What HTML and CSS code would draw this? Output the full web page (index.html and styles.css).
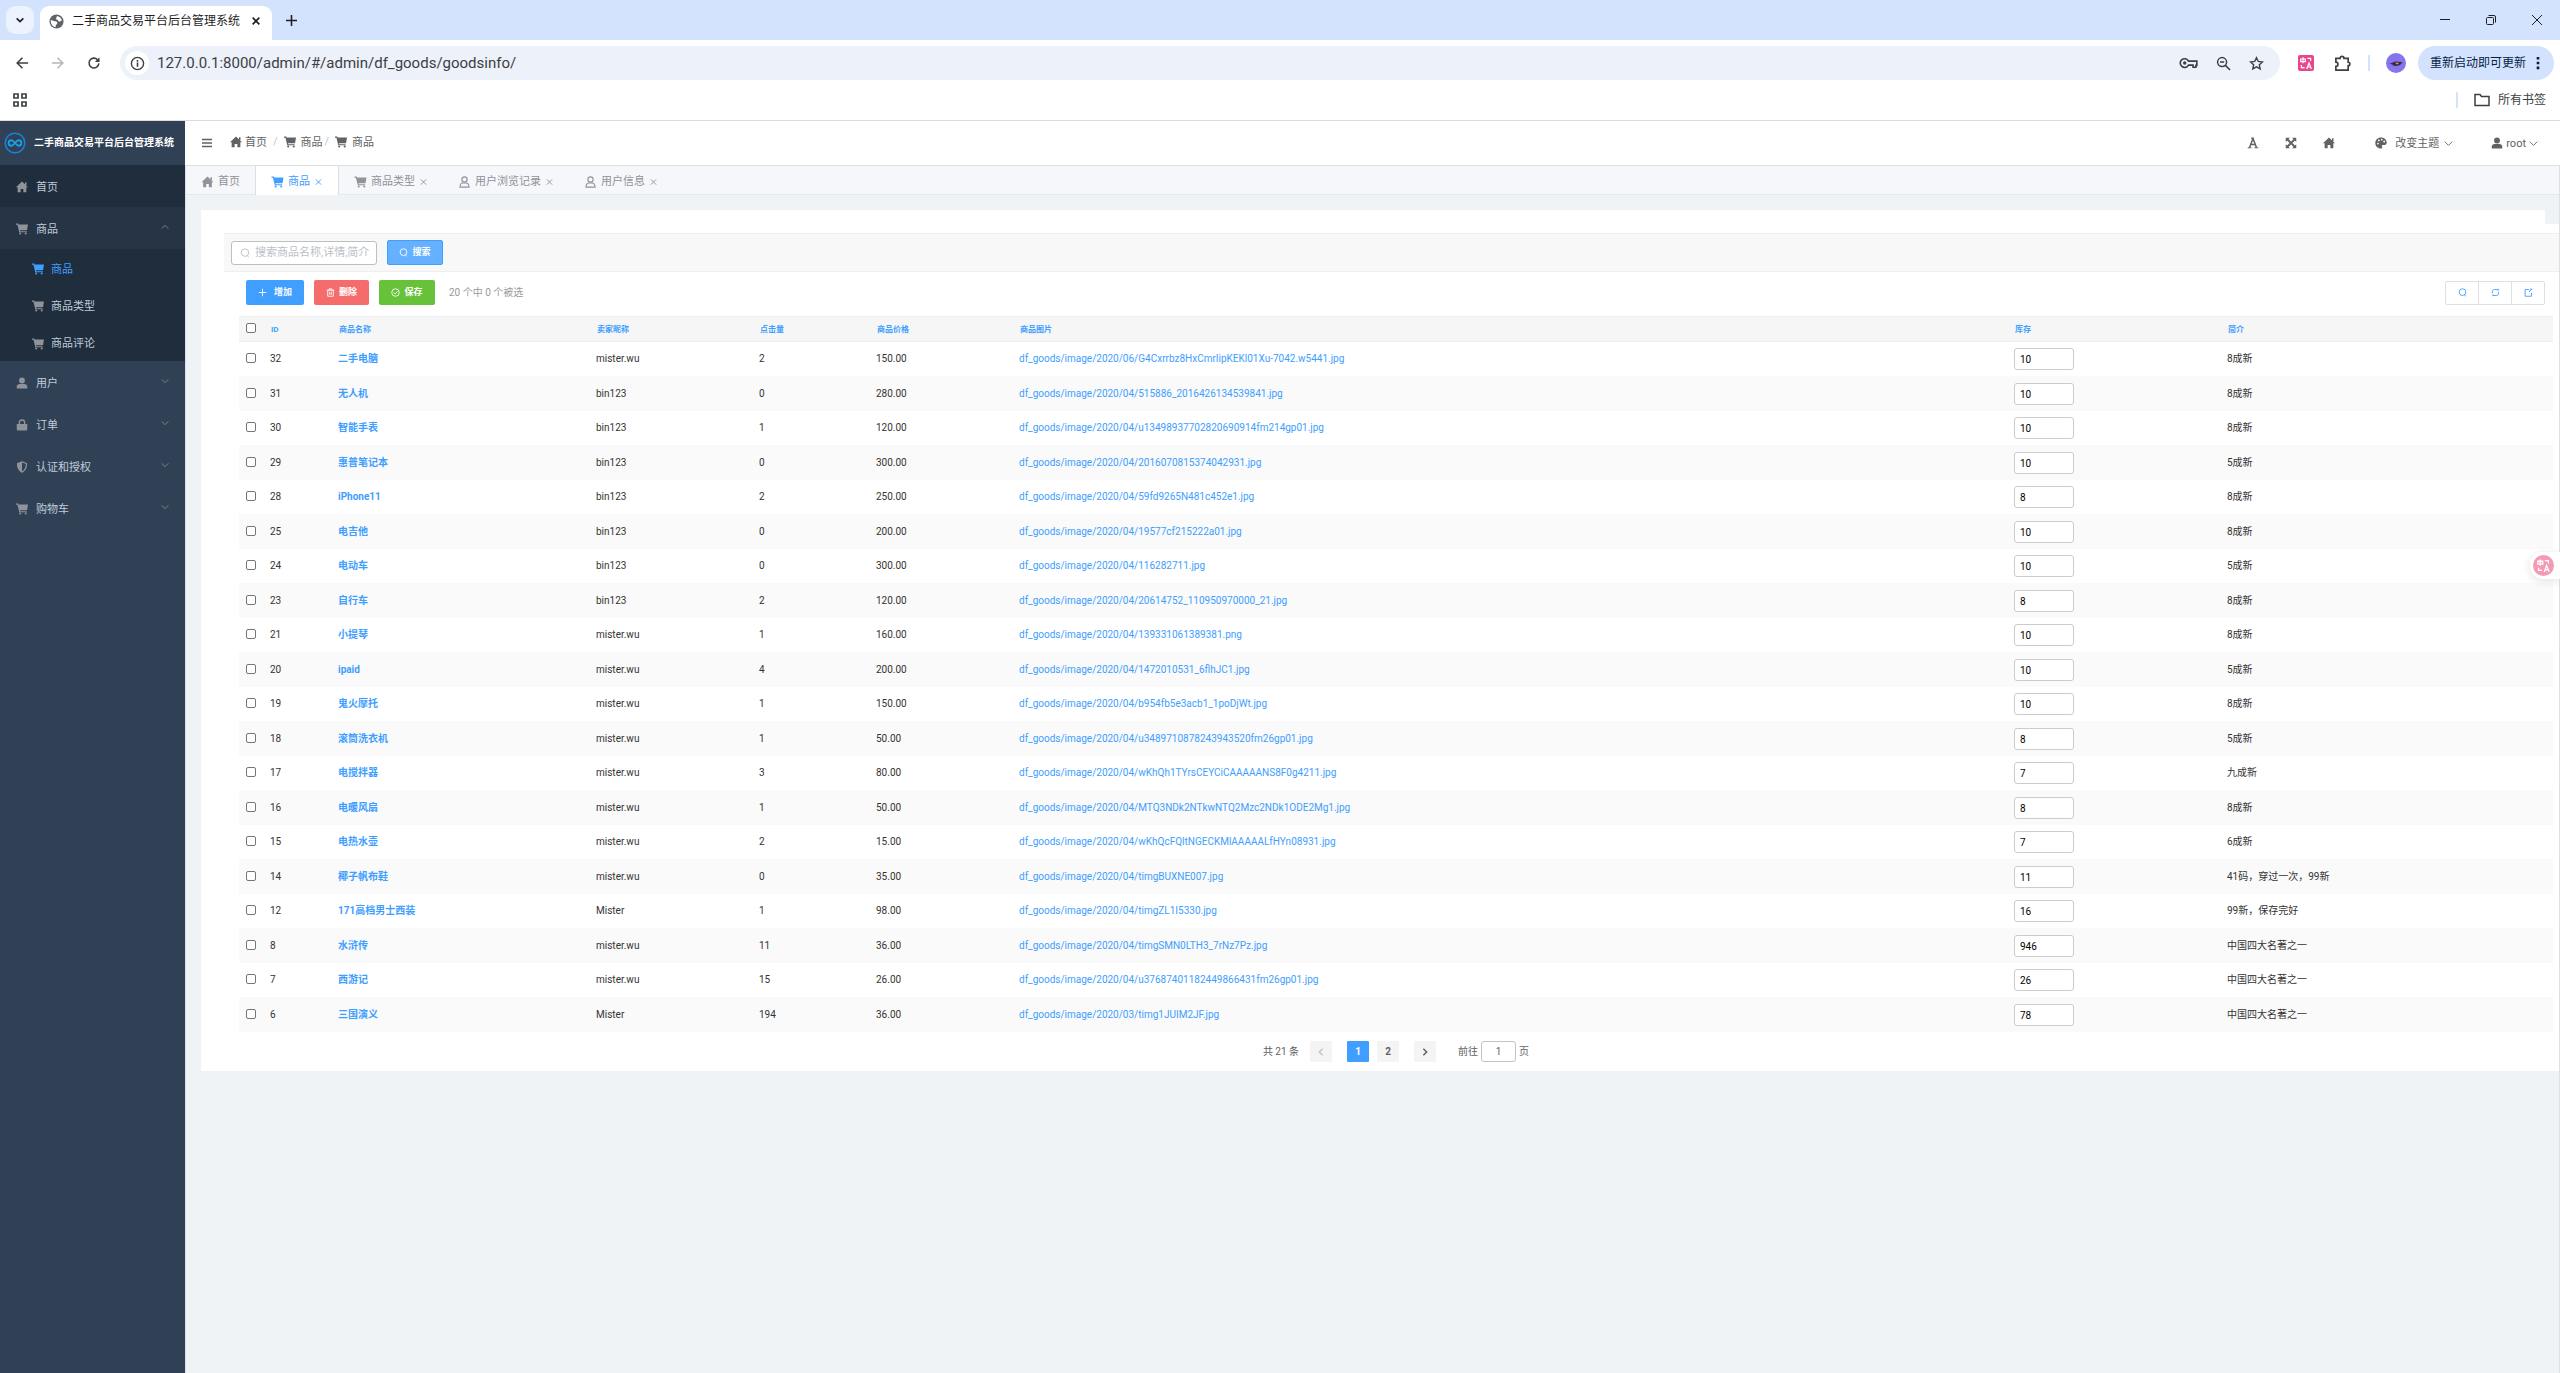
FILE: index.html
```html
<!DOCTYPE html>
<html lang="zh-CN">
<head>
  <meta charset="UTF-8">
  <title>二手商品交易平台后台管理系统</title>
  <meta name="viewport" content="width=device-width, initial-scale=1.0">
  <link rel="stylesheet" href="styles.css">
</head>
<body>
  <svg class="sprite" aria-hidden="true">
    <symbol id="i-home" viewBox="0 0 16 16"><path fill="currentColor" d="M8 .8 16 8.2h-2.2V15H9.8v-4.4H6.2V15H2.2V8.2H0L8 .8z"/><path fill="currentColor" d="M12 1.8h2v4h-2z"/></symbol>
    <symbol id="i-cart" viewBox="0 0 16 16"><path fill="currentColor" d="M0 .8h3l.5 1.200H16l-1.300 7.800H5.300l.3 1.200h8.600v1.400H4.400L1.900 2.300H0z"/><circle cx="5.6" cy="14" r="1.4" fill="currentColor"/><circle cx="13" cy="14" r="1.4" fill="currentColor"/></symbol>
    <symbol id="i-user" viewBox="0 0 16 16"><circle cx="8" cy="4.6" r="3.9" fill="currentColor"/><path fill="currentColor" d="M1 15.2v-2.4C1 10.600 2.800 9.300 5 9.300h6c2.200 0 4 1.300 4 3.500v2.400z"/></symbol>
    <symbol id="i-user-o" viewBox="0 0 16 16"><circle cx="8" cy="4.700" r="3.500" fill="none" stroke="currentColor" stroke-width="1.500"/><path fill="none" stroke="currentColor" stroke-width="1.500" d="M2 14.800c0-3.500 2-5.500 4-5.500h4c2 0 4 2 4 5.500z"/></symbol>
    <symbol id="i-bag" viewBox="0 0 16 16"><path fill="currentColor" d="M1 6.500h14v7.200c0 1-.7 1.500-1.500 1.500h-11c-.8 0-1.500-.5-1.500-1.500z"/><path fill="none" stroke="currentColor" stroke-width="1.800" d="M4.500 8V4.800a3.500 3.500 0 0 1 7 0V8"/></symbol>
    <symbol id="i-shield" viewBox="0 0 16 16"><path fill="none" stroke="currentColor" stroke-width="1.600" d="M8 1.200l6 2.200c0 5.500-1.500 9-6 11.400C3.500 12.400 2 8.900 2 3.400z"/><path fill="currentColor" d="M8 1.200v13.600C3.500 12.400 2 8.900 2 3.400z"/></symbol>
    <symbol id="i-down" viewBox="0 0 12 12"><path fill="none" stroke="currentColor" stroke-width="1.200" d="M1 3.500l5 5 5-5"/></symbol>
    <symbol id="i-up" viewBox="0 0 12 12"><path fill="none" stroke="currentColor" stroke-width="1.200" d="M1 8.500l5-5 5 5"/></symbol>
    <symbol id="i-close" viewBox="0 0 12 12"><path fill="none" stroke="currentColor" stroke-width="1.400" d="M2 2l8 8M10 2l-8 8"/></symbol>
    <symbol id="i-menu" viewBox="0 0 12 12"><path stroke="currentColor" stroke-width="1.300" d="M1 2.500h10M1 6h10M1 9.500h10"/></symbol>
    <symbol id="i-letter" viewBox="0 0 16 16"><path fill="none" stroke="currentColor" stroke-width="2" d="M3.400 14L8 2l4.600 12M4.800 10h6.400"/><path stroke="currentColor" stroke-width="1.400" d="M1 14.300h5M10 14.300h5M5.500 1.800h3"/></symbol>
    <symbol id="i-full" viewBox="0 0 16 16"><path fill="currentColor" d="M1 1h5.500L1 6.500zM15 1v5.500L9.500 1zM1 15V9.500L6.500 15zM15 15H9.500L15 9.500z"/><path stroke="currentColor" stroke-width="2.600" d="M3 3l10 10M13 3L3 13"/></symbol>
    <symbol id="i-palette" viewBox="0 0 16 16"><path fill="currentColor" fill-rule="evenodd" d="M8 .6c4.400 0 7.600 3 7.600 6.700 0 2.500-1.800 3.500-3.600 3.500h-1.700c-1.500 0-1.300 1.400-.8 2.200.6 1.300 0 2.400-1.500 2.400C3.600 15.400.4 12.200.4 8S3.800.6 8 .6zM4 7.500a1.200 1.200 0 1 0 0 2.400 1.200 1.200 0 0 0 0-2.400zM5.200 3.400a1.200 1.200 0 1 0 0 2.400 1.200 1.200 0 0 0 0-2.400zM9 2.200a1.200 1.200 0 1 0 0 2.400 1.200 1.200 0 0 0 0-2.400zM12.200 4.800a1.200 1.200 0 1 0 0 2.400 1.200 1.200 0 0 0 0-2.400z"/></symbol>
    <symbol id="i-search" viewBox="0 0 12 12"><path fill="none" stroke="currentColor" stroke-width="1.200" d="M6 1a4.500 4.500 0 1 0 0 9 4.500 4.500 0 0 0 0-9zM8.500 9.200l2 1.800"/></symbol>
    <symbol id="i-plus" viewBox="0 0 12 12"><path stroke="currentColor" stroke-width="1.200" d="M6 1v10M1 6h10"/></symbol>
    <symbol id="i-trash" viewBox="0 0 12 12"><path fill="none" stroke="currentColor" stroke-width="1.200" d="M1 3h10M4 3V1.200h4V3M2.300 3v8h7.400V3M4.900 5v4M7.100 5v4"/></symbol>
    <symbol id="i-check" viewBox="0 0 12 12"><circle cx="6" cy="6" r="5" fill="none" stroke="currentColor" stroke-width="1.200"/><path fill="none" stroke="currentColor" stroke-width="1.200" d="M3.500 6l2 2 3.300-3.600"/></symbol>
    <symbol id="i-refresh" viewBox="0 0 12 12"><path fill="none" stroke="currentColor" stroke-width="1.200" d="M2 7V5C2 3 3 2 5 2H9.500M10 5V7c0 2-1 3-3 3H2.500M9.500 1v2.500M2.500 11V8.500"/></symbol>
    <symbol id="i-export" viewBox="0 0 12 12"><path fill="none" stroke="currentColor" stroke-width="1.200" d="M6.500 2H1.500v9h8.500V6.500M7 5l3.500-3.500M8 1.500h3M7.500 3.500v2"/></symbol>
    <symbol id="i-translate" viewBox="0 0 24 24"><path fill="none" stroke="currentColor" stroke-width="1.800" d="M4 6h7v4H4zM7.500 3.500v9M14 5h5v4M5 15v4h5M13 21l3.500-9 3.500 9M14.500 18h4"/></symbol>
  </svg>

  <!-- browser window -->
  <header class="browser">
    <div class="tabstrip">
      <button class="tab-search" aria-label="搜索标签页"><svg viewBox="0 0 12 12"><path fill="none" stroke="currentColor" stroke-width="2" d="M2 4l4 4 4-4"/></svg></button>
      <div class="browser-tab">
        <svg class="favicon" viewBox="0 0 16 16"><circle cx="8" cy="8" r="7.500" fill="#5f6368"/><path fill="#fff" d="M2 6.500c2 .2 2.600 1.200 4.500 1.300 1.700 0 2.600 1 2.300 2.300-.2 1-1.400 1-1.600 2.200l-.3 1.900C3.500 13.700 1.300 10 2 6.500zM8.600 2c2 .2 4.600 2 5.200 4.600-1.200.6-1.800 1.700-3 1.500-1.400-.3-1-1.900-2.300-2.200C7.200 5.500 7 4.400 8 3.700z"/></svg>
        <span>二手商品交易平台后台管理系统</span>
        <button aria-label="关闭"><svg viewBox="0 0 12 12"><path stroke="currentColor" stroke-width="2" d="M2 2l8 8M10 2l-8 8"/></svg></button>
      </div>
      <button class="tab-new" aria-label="新标签页"><svg viewBox="0 0 12 12"><path stroke="currentColor" stroke-width="1.700" d="M6 0v12M0 6h12"/></svg></button>
      <div class="window-buttons">
        <button aria-label="最小化"><svg viewBox="0 0 12 12"><path stroke="currentColor" d="M1 5.500h10"/></svg></button>
        <button aria-label="还原"><svg viewBox="0 0 12 12"><rect x="1.500" y="3.500" width="7" height="7" rx="1" fill="none" stroke="currentColor"/><path fill="none" stroke="currentColor" d="M3.500 1.500h5.500a1.500 1.500 0 0 1 1.500 1.500v5.500"/></svg></button>
        <button aria-label="关闭窗口"><svg viewBox="0 0 12 12"><path stroke="currentColor" d="M1 1l10 10M11 1L1 11"/></svg></button>
      </div>
    </div>
    <div class="toolbar">
      <button class="nav" aria-label="后退"><svg viewBox="0 0 16 16"><path fill="none" stroke="currentColor" stroke-width="1.800" d="M15 8H3M8.500 2L2.500 8l6 6"/></svg></button>
      <button class="nav nav-off" aria-label="前进"><svg viewBox="0 0 16 16"><path fill="none" stroke="currentColor" stroke-width="1.800" d="M1 8h12M7.500 2l6 6-6 6"/></svg></button>
      <button class="nav" aria-label="刷新"><svg viewBox="0 0 16 16"><path fill="none" stroke="currentColor" stroke-width="1.800" d="M13.500 8.500A5.600 5.600 0 1 1 12 4.200L13.500 6"/><path fill="currentColor" d="M14.300 1.500v5.300H9z"/></svg></button>
      <div class="omnibox">
        <span class="site-info"><svg viewBox="0 0 16 16"><circle cx="8" cy="8" r="6.500" fill="none" stroke="currentColor" stroke-width="1.500"/><path stroke="currentColor" stroke-width="1.700" d="M8 7v4.500M8 4.200v1.800"/></svg></span>
        <input class="url" type="text" aria-label="地址栏" value="127.0.0.1:8000/admin/#/admin/df_goods/goodsinfo/">
        <button aria-label="密码"><svg class="key" viewBox="0 0 20 12"><path fill="none" stroke="currentColor" stroke-width="1.700" d="M10 4h8.800v4.500h-1v2h-3V8.200H10A4.600 4.600 0 1 1 10 4z"/><circle cx="6" cy="6" r="1.800" fill="currentColor"/></svg></button>
        <button aria-label="缩放"><svg viewBox="0 0 16 16"><circle cx="6.500" cy="6.500" r="4.800" fill="none" stroke="currentColor" stroke-width="1.600"/><path stroke="currentColor" stroke-width="1.600" d="M10 10l5 5M4.300 6.500h4.400"/></svg></button>
        <button aria-label="添加书签"><svg viewBox="0 0 16 16"><path fill="none" stroke="currentColor" stroke-width="1.500" d="M8 1.800l1.900 4 4.400.5-3.300 3 .9 4.400L8 11.500l-3.900 2.200.9-4.400-3.300-3 4.400-.5z"/></svg></button>
      </div>
      <button class="ext ext-translate" aria-label="翻译"><svg><use href="#i-translate"/></svg></button>
      <button class="ext" aria-label="扩展程序"><svg viewBox="0 0 18 18"><path fill="none" stroke="currentColor" stroke-width="1.800" d="M2 3.500h4.500a2 2 0 0 1 4 0H15v4.200a1.800 1.800 0 0 1 0 3.600V16H2v-4a2.200 2.200 0 0 0 0-4.400z"/></svg></button>
      <i class="divider"></i>
      <span class="avatar"><svg viewBox="0 0 20 20"><circle cx="10" cy="10" r="10" fill="#8574ee"/><path fill="#3d2a3c" d="M3.500 10c3 .8 3.500-1.600 7-1.500 3 .1 3.600 1 6 .6-1.400 2.400-2.600 3.800-6.400 3.800-2.600 0-3.600-.6-3.800-1.700-1.200 0-2-.3-2.800-1.200z"/><path fill="#d9a58c" d="M9 9.500l4 .4-2 1.700z"/><path stroke="#b66fd8" fill="none" d="M14 3l1 4M5 15l4 3M15 14l1 2"/></svg></span>
      <button class="update">重新启动即可更新 <svg viewBox="0 0 4 16"><path fill="currentColor" d="M.5 1h3v3h-3zM.5 6.500h3v3h-3zM.5 12h3v3h-3z"/></svg></button>
    </div>
    <div class="bookmarks">
      <button aria-label="应用"><svg viewBox="0 0 16 16"><path fill="none" stroke="currentColor" stroke-width="1.700" d="M2 2h4v4H2zM10 2h4v4h-4zM2 10h4v4H2zM10 10h4v4h-4z"/></svg></button>
      <button class="all-bookmarks"><svg viewBox="0 0 16 14"><path fill="none" stroke="currentColor" stroke-width="1.500" d="M1 1.500h5l1.500 2H15v9H1z"/></svg>所有书签</button>
    </div>
  </header>

  <div class="app">
    <aside class="sidebar">
      <div class="logo">
        <svg viewBox="0 0 24 24"><circle cx="12" cy="12" r="10.700" fill="none" stroke="#1a82d8" stroke-width="1.600"/><path fill="none" stroke="#17a0e8" stroke-width="2" d="M12 12c-1.600-2-2.600-3-4-3a3 3 0 0 0 0 6c1.400 0 2.400-1 4-3s2.600-3 4-3a3 3 0 0 1 0 6c-1.400 0-2.400-1-4-3z"/></svg>
        <strong>二手商品交易平台后台管理系统</strong>
      </div>
      <nav>
        <a class="item dark" href="#"><svg><use href="#i-home"/></svg>首页</a>
        <a class="item open" href="#"><svg><use href="#i-cart"/></svg>商品<svg class="arrow"><use href="#i-up"/></svg></a>
        <div class="submenu">
          <a class="active" href="#"><svg><use href="#i-cart"/></svg>商品</a>
          <a href="#"><svg><use href="#i-cart"/></svg>商品类型</a>
          <a href="#"><svg><use href="#i-cart"/></svg>商品评论</a>
        </div>
        <a class="item" href="#"><svg><use href="#i-user"/></svg>用户<svg class="arrow"><use href="#i-down"/></svg></a>
        <a class="item" href="#"><svg><use href="#i-bag"/></svg>订单<svg class="arrow"><use href="#i-down"/></svg></a>
        <a class="item" href="#"><svg><use href="#i-shield"/></svg>认证和授权<svg class="arrow"><use href="#i-down"/></svg></a>
        <a class="item" href="#"><svg><use href="#i-cart"/></svg>购物车<svg class="arrow"><use href="#i-down"/></svg></a>
      </nav>
    </aside>

    <main class="main">
      <div class="topbar">
        <button class="fold" aria-label="折叠菜单"><svg><use href="#i-menu"/></svg></button>
        <div class="breadcrumb">
          <a href="#"><svg><use href="#i-home"/></svg>首页</a><i>/</i>
          <a class="wide" href="#"><svg><use href="#i-cart"/></svg>商品</a><i>/</i>
          <a class="wide" href="#"><svg><use href="#i-cart"/></svg>商品</a>
        </div>
        <div class="actions">
          <button aria-label="字体"><svg><use href="#i-letter"/></svg></button>
          <button aria-label="全屏"><svg><use href="#i-full"/></svg></button>
          <button aria-label="主页"><svg><use href="#i-home"/></svg></button>
        </div>
        <button class="theme"><svg><use href="#i-palette"/></svg>改变主题<svg class="caret"><use href="#i-down"/></svg></button>
        <button class="account"><svg><use href="#i-user"/></svg>root<svg class="caret"><use href="#i-down"/></svg></button>
      </div>

      <div class="workspace">
        <div class="tabs">
          <a href="#"><svg><use href="#i-home"/></svg>首页</a>
          <a class="active" href="#"><svg><use href="#i-cart"/></svg>商品<svg class="close"><use href="#i-close"/></svg></a>
          <a href="#"><svg><use href="#i-cart"/></svg>商品类型<svg class="close"><use href="#i-close"/></svg></a>
          <a href="#"><svg><use href="#i-user-o"/></svg>用户浏览记录<svg class="close"><use href="#i-close"/></svg></a>
          <a href="#"><svg><use href="#i-user-o"/></svg>用户信息<svg class="close"><use href="#i-close"/></svg></a>
        </div>

        <div class="panel-top"></div>
        <div class="panel">
          <form class="search">
            <label class="search-box"><svg><use href="#i-search"/></svg><input type="text" aria-label="搜索" placeholder="搜索商品名称,详情,简介"></label>
            <button class="btn btn-search" type="button"><svg><use href="#i-search"/></svg>搜索</button>
          </form>

          <div class="operations">
            <button class="btn btn-add"><svg><use href="#i-plus"/></svg>增加</button>
            <button class="btn btn-delete"><svg><use href="#i-trash"/></svg>删除</button>
            <button class="btn btn-save"><svg><use href="#i-check"/></svg>保存</button>
            <span>20 个中 0 个被选</span>
            <div class="tools">
              <button aria-label="搜索"><svg><use href="#i-search"/></svg></button>
              <button aria-label="刷新"><svg><use href="#i-refresh"/></svg></button>
              <button aria-label="新窗口打开"><svg><use href="#i-export"/></svg></button>
            </div>
          </div>

          <table class="goods">
            <thead>
              <tr>
                <th class="c-check"><input type="checkbox" aria-label="全选"></th>
                <th class="c-id"><a href="#">ID</a></th>
                <th class="c-name"><a href="#">商品名称</a></th>
                <th class="c-seller"><a href="#">卖家昵称</a></th>
                <th class="c-click"><a href="#">点击量</a></th>
                <th class="c-price"><a href="#">商品价格</a></th>
                <th><a href="#">商品图片</a></th>
                <th class="c-stock"><a href="#">库存</a></th>
                <th class="c-intro"><a href="#">简介</a></th>
              </tr>
            </thead>
            <tbody id="rows"></tbody>
          </table>

          <div class="pagination">
            <span>共 21 条</span>
            <button class="prev" disabled aria-label="上一页"><svg viewBox="0 0 12 12"><path fill="none" stroke="currentColor" stroke-width="1.800" d="M8 2L4 6l4 4"/></svg></button>
            <button class="current">1</button>
            <button>2</button>
            <button class="next" aria-label="下一页"><svg viewBox="0 0 12 12"><path fill="none" stroke="currentColor" stroke-width="1.800" d="M4 2l4 4-4 4"/></svg></button>
            <label>前往<input type="text" value="1">页</label>
          </div>
        </div>
      </div>
    </main>
  </div>

  <button class="float-translate" aria-label="翻译页面"><span><svg><use href="#i-translate"/></svg></span></button>

  <script src="goods.js"></script>
</body>
</html>
```
FILE: styles.css
```css
:root {
  --blue: #409eff;
  --red: #f56c6c;
  --green: #67c23a;
  --side: #304156;
  --side-dark: #1f2d3d;
  --line: #dcdfe6;
  --grey: #909399;
  --text: #606266;
}

* {
  box-sizing: border-box;
  margin: 0;
  padding: 0;
}

body {
  display: flex;
  flex-direction: column;
  min-height: 100vh;
  background: #fff;
  color: #333;
  font-family: Roboto, "Noto Sans CJK SC", sans-serif;
  font-size: 10px;
  line-height: 1;
}

button,
input {
  font: inherit;
  color: inherit;
  border: none;
  background: none;
  outline: none;
}

button {
  display: flex;
  align-items: center;
  cursor: pointer;
}

a {
  color: inherit;
  text-decoration: none;
}

i {
  font-style: normal;
}

svg {
  display: block;
  flex: none;
}

.sprite {
  display: none;
}

/* browser window */
.browser {
  flex: none;
  color: #3c4043;
  font-size: 12px;
  border-bottom: 1px solid #dcdcdc;
}

.tabstrip {
  display: flex;
  height: 40px;
  padding: 6px 0 0 6px;
  background: #d3e3fd;
  color: #1f1f1f;
}

.tab-search {
  justify-content: center;
  width: 28px;
  height: 28px;
  border-radius: 9px;
  background: #ecf2fe;
}

.tab-search svg {
  width: 10px;
  height: 10px;
}

.browser-tab {
  display: flex;
  align-items: center;
  gap: 8px;
  width: 232px;
  margin-left: 6px;
  padding: 0 11px 4px 9px;
  border-radius: 9px 9px 0 0;
  background: #fff;
}

.browser-tab span {
  flex: 1;
  white-space: nowrap;
}

.favicon {
  width: 15px;
  height: 15px;
}

.browser-tab button svg {
  width: 10px;
  height: 10px;
}

.tab-new {
  height: 28px;
  margin-left: 14px;
}

.tab-new svg {
  width: 11px;
  height: 11px;
}

.window-buttons {
  display: flex;
  height: 28px;
  margin-left: auto;
}

.window-buttons button {
  justify-content: center;
  width: 46px;
}

.window-buttons svg {
  width: 12px;
  height: 12px;
}

.toolbar {
  display: flex;
  align-items: center;
  height: 46px;
  padding: 0 6px 0 12px;
}

.nav {
  width: 36px;
}

.nav svg {
  width: 14px;
  height: 14px;
  margin-left: 3px;
}

.nav-off {
  color: #b4b6b8;
}

.omnibox {
  flex: 1;
  display: flex;
  align-items: center;
  gap: 18px;
  height: 34px;
  padding: 0 16px 0 5px;
  border-radius: 17px;
  background: #edf1fa;
}

.omnibox svg {
  width: 15px;
  height: 15px;
}

.omnibox .key {
  width: 19px;
  height: 12px;
}

.site-info {
  display: flex;
  align-items: center;
  justify-content: center;
  width: 24px;
  height: 24px;
  border-radius: 50%;
  background: #fff;
}

.url {
  flex: 1;
  margin-left: -10px;
  font-size: 15px;
}

.ext {
  margin-left: 20px;
}

.ext svg {
  width: 17px;
  height: 17px;
}

.ext-translate {
  margin-left: 18px;
  border-radius: 2px;
  color: #fff;
  background: #e8468a;
}

.ext-translate svg {
  width: 16px;
  height: 16px;
}

.divider {
  width: 2px;
  height: 16px;
  margin-left: 17px;
  background: #d3e3fd;
}

.avatar {
  margin: 0 12px 0 16px;
}

.avatar svg {
  width: 20px;
  height: 20px;
}

.update {
  gap: 10px;
  height: 34px;
  padding: 0 14px 0 12px;
  border-radius: 17px;
  color: #041e49;
  background: #d3e3fd;
}

.update svg {
  width: 4px;
  height: 14px;
}

.bookmarks {
  display: flex;
  align-items: center;
  justify-content: space-between;
  height: 34px;
  padding: 0 14px 6px 12px;
}

.bookmarks svg {
  width: 16px;
  height: 16px;
}

.bookmarks .all-bookmarks {
  gap: 8px;
  padding-left: 16px;
  border-left: 2px solid #d3e3fd;
}

/* admin layout */
.app {
  flex: 1;
  display: flex;
}

.sidebar {
  flex: none;
  width: 185px;
  background: var(--side);
  color: #bfcbd9;
  font-size: 11px;
}

.logo {
  display: flex;
  align-items: center;
  gap: 8px;
  height: 44px;
  padding-left: 4px;
  color: #fff;
  font-size: 10px;
}

.logo svg {
  width: 22px;
  height: 22px;
}

.item {
  display: flex;
  align-items: center;
  gap: 8px;
  height: 42px;
  padding: 2px 16px 0;
}

.sidebar a svg {
  width: 12px;
  height: 12px;
  color: var(--grey);
}

.sidebar .item .arrow {
  width: 8px;
  height: 8px;
  margin: 0 0 4px auto;
}

.item.dark {
  background: var(--side-dark);
}

.item.open {
  background: #263445;
}

.submenu {
  height: 112px;
  display: flex;
  flex-direction: column;
  background: var(--side-dark);
}

.submenu a {
  flex: 1;
  display: flex;
  align-items: center;
  gap: 7px;
  padding: 3px 0 0 32px;
}

.submenu .active,
.submenu .active svg {
  color: var(--blue);
}

.main {
  flex: 1;
  min-width: 0;
  display: flex;
  flex-direction: column;
}

.topbar {
  display: flex;
  align-items: center;
  height: 44px;
  padding: 0 22px 0 16px;
  color: var(--text);
  font-size: 11px;
}

.topbar svg {
  width: 12px;
  height: 12px;
}

.topbar .caret {
  width: 9px;
  height: 9px;
}

.breadcrumb {
  display: flex;
  margin-left: 17px;
  padding-bottom: 2px;
}

.breadcrumb a {
  display: flex;
  align-items: center;
  gap: 3px;
}

.breadcrumb .wide {
  gap: 5px;
}

.breadcrumb i {
  margin: 0 6px;
  color: #c0c4cc;
}

.breadcrumb .wide + i {
  margin: 0 6px 0 2px;
}

.actions {
  display: flex;
  gap: 26px;
  margin-left: auto;
}

.theme {
  gap: 8px;
  margin-left: 40px;
}

.theme .caret {
  margin-left: -3px;
}

.account {
  gap: 3px;
  margin-left: 38px;
}

.workspace {
  flex: 1;
  border: 1px solid var(--line);
  border-bottom: none;
  background: #eff3f6;
}

.tabs {
  display: flex;
  height: 29px;
  margin-bottom: 15px;
  border-bottom: 1px solid #e4e7ed;
  background: #f5f7fa;
  color: var(--grey);
  font-size: 11px;
}

.tabs a {
  display: flex;
  align-items: center;
  gap: 4px;
  height: 29px;
  padding: 2px 15px 0;
}

.tabs svg {
  width: 13px;
  height: 12px;
}

.tabs .close {
  width: 9px;
  height: 8px;
}

.tabs .active {
  border-left: 1px solid var(--line);
  border-right: 1px solid var(--line);
  color: var(--blue);
  background: #fff;
}

.panel-top {
  height: 14px;
  margin: 0 14px 0 15px;
  background: #fff;
}

.panel {
  margin-left: 15px;
  padding: 9px 0 9px 23px;
  background: #fff;
}

.search {
  display: flex;
  align-items: center;
  gap: 10px;
  height: 39px;
  padding-left: 7px;
  border-top: 1px solid #eee;
  border-bottom: 1px solid #eee;
  background: #f8f8f8;
}

.search-box {
  display: flex;
  align-items: center;
  gap: 5px;
  width: 146px;
  height: 24px;
  padding: 0 2px 0 8px;
  border: 1px solid #bfbfbf;
  border-radius: 3px;
  background: #fff;
  color: #c0c4cc;
}

.search-box svg {
  width: 10px;
  height: 10px;
}

.search-box input {
  flex: 1;
  min-width: 0;
  font-size: 11px;
}

.search-box input::placeholder {
  color: #bbbfc7;
}

.btn {
  justify-content: center;
  gap: 4px;
  min-width: 56px;
  height: 25px;
  border-radius: 2px;
  color: #fff;
  font-size: 9px;
  font-weight: bold;
}

.btn svg {
  width: 9px;
  height: 9px;
}

.btn-search {
  border: 1px solid var(--blue);
  background: #66b1ff;
}

.btn-add {
  min-width: 58px;
  gap: 7px;
  background: var(--blue);
}

.btn-delete {
  min-width: 55px;
  background: var(--red);
}

.btn-save {
  background: var(--green);
}

.operations {
  display: flex;
  align-items: center;
  gap: 10px;
  padding: 8px 14px 11px 22px;
}

.operations span {
  margin-left: 4px;
  color: #999;
}

.tools {
  display: flex;
  margin-left: auto;
  border: 1px solid var(--line);
  border-radius: 2px;
}

.tools button {
  justify-content: center;
  width: 32px;
  height: 22px;
  color: var(--blue);
}

.tools button + button {
  width: 33px;
  border-left: 1px solid var(--line);
}

.tools svg {
  width: 9px;
  height: 9px;
}

.goods {
  width: calc(100% - 21px);
  margin-left: 15px;
  table-layout: fixed;
  border-collapse: separate;
  border-spacing: 0;
}

.goods th {
  height: 26px;
  padding: 2px 7px 0;
  border-top: 1px solid #eee;
  border-bottom: 1px solid #eee;
  background: #f6f6f6;
  color: var(--blue);
  font-size: 8px;
  font-weight: bold;
  text-align: left;
}

.goods td {
  height: 34px;
  padding: 0 6px;
}

.goods tbody tr:nth-child(even) td {
  height: 35px;
  background: #fafafa;
}

.goods .c-check {
  width: 25px;
  padding: 0 0 2px 7px;
}

.c-id { width: 68px; }
.c-name { width: 258px; }
.c-seller { width: 163px; }
.c-click { width: 117px; }
.c-price { width: 143px; }
.c-stock { width: 213px; }
.c-intro { width: 332px; }

.goods td a {
  color: var(--blue);
}

.goods td.c-name {
  font-weight: bold;
}

.goods input[type="checkbox"] {
  appearance: none;
  display: block;
  width: 10px;
  height: 10px;
  border: 1px solid #767676;
  border-radius: 2px;
  background: #fff;
}

.goods .stock {
  display: block;
  width: 60px;
  height: 22px;
  padding: 1px 5px 0;
  border: 1px solid #ccc;
  border-radius: 3px;
  background: #fff;
  color: #000;
}

.pagination {
  display: flex;
  align-items: center;
  justify-content: center;
  gap: 8px;
  padding: 9px 6px 0 15px;
  color: var(--text);
}

.pagination button {
  justify-content: center;
  width: 22px;
  height: 21px;
  border-radius: 1px;
  background: #f4f4f5;
  font-weight: bold;
}

.pagination svg {
  width: 10px;
  height: 10px;
}

.pagination .prev {
  margin: 0 7px 0 3px;
  color: #c0c4cc;
}

.pagination .next {
  margin: 0 14px 0 7px;
}

.pagination .current {
  color: #fff;
  background: var(--blue);
}

.pagination label {
  display: flex;
  align-items: center;
  gap: 3px;
}

.pagination input {
  width: 35px;
  height: 21px;
  border: 1px solid #c4c4c4;
  border-radius: 3px;
  text-align: center;
}

.float-translate {
  position: fixed;
  top: 552px;
  right: 0;
  width: 30px;
  height: 27px;
  padding-left: 3px;
  border-radius: 13px 0 0 13px;
  background: #fff;
  box-shadow: 0 2px 8px rgba(0, 0, 0, 0.12);
}

.float-translate span {
  display: flex;
  align-items: center;
  justify-content: center;
  width: 21px;
  height: 21px;
  border-radius: 50%;
  background: #f49ab5;
  color: #fff;
}

.float-translate svg {
  width: 17px;
  height: 17px;
}
```
FILE: goods.js
```javascript
// id, name, seller, clicks, price, image, stock, intro
const goods = [
  [32, '二手电脑', 'mister.wu', 2, '150.00', '2020/06/G4Cxrrbz8HxCmrIipKEKl01Xu-7042.w5441.jpg', 10, '8成新'],
  [31, '无人机', 'bin123', 0, '280.00', '2020/04/515886_2016426134539841.jpg', 10, '8成新'],
  [30, '智能手表', 'bin123', 1, '120.00', '2020/04/u13498937702820690914fm214gp01.jpg', 10, '8成新'],
  [29, '惠普笔记本', 'bin123', 0, '300.00', '2020/04/2016070815374042931.jpg', 10, '5成新'],
  [28, 'iPhone11', 'bin123', 2, '250.00', '2020/04/59fd9265N481c452e1.jpg', 8, '8成新'],
  [25, '电吉他', 'bin123', 0, '200.00', '2020/04/19577cf215222a01.jpg', 10, '8成新'],
  [24, '电动车', 'bin123', 0, '300.00', '2020/04/116282711.jpg', 10, '5成新'],
  [23, '自行车', 'bin123', 2, '120.00', '2020/04/20614752_110950970000_21.jpg', 8, '8成新'],
  [21, '小提琴', 'mister.wu', 1, '160.00', '2020/04/139331061389381.png', 10, '8成新'],
  [20, 'ipaid', 'mister.wu', 4, '200.00', '2020/04/1472010531_6flhJC1.jpg', 10, '5成新'],
  [19, '鬼火摩托', 'mister.wu', 1, '150.00', '2020/04/b954fb5e3acb1_1poDjWt.jpg', 10, '8成新'],
  [18, '滚筒洗衣机', 'mister.wu', 1, '50.00', '2020/04/u3489710878243943520fm26gp01.jpg', 8, '5成新'],
  [17, '电搅拌器', 'mister.wu', 3, '80.00', '2020/04/wKhQh1TYrsCEYCiCAAAAANS8F0g4211.jpg', 7, '九成新'],
  [16, '电暖风扇', 'mister.wu', 1, '50.00', '2020/04/MTQ3NDk2NTkwNTQ2Mzc2NDk1ODE2Mg1.jpg', 8, '8成新'],
  [15, '电热水壶', 'mister.wu', 2, '15.00', '2020/04/wKhQcFQltNGECKMlAAAAALfHYn08931.jpg', 7, '6成新'],
  [14, '椰子帆布鞋', 'mister.wu', 0, '35.00', '2020/04/timgBUXNE007.jpg', 11, '41码，穿过一次，99新'],
  [12, '171高档男士西装', 'Mister', 1, '98.00', '2020/04/timgZL1I5330.jpg', 16, '99新，保存完好'],
  [8, '水浒传', 'mister.wu', 11, '36.00', '2020/04/timgSMN0LTH3_7rNz7Pz.jpg', 946, '中国四大名著之一'],
  [7, '西游记', 'mister.wu', 15, '26.00', '2020/04/u37687401182449866431fm26gp01.jpg', 26, '中国四大名著之一'],
  [6, '三国演义', 'Mister', 194, '36.00', '2020/03/timg1JUIM2JF.jpg', 78, '中国四大名著之一']
];

document.getElementById('rows').innerHTML = goods.map(([id, name, seller, clicks, price, image, stock, intro]) => `
  <tr>
    <td class="c-check"><input type="checkbox" aria-label="选择 ${id}"></td>
    <td>${id}</td>
    <td class="c-name"><a href="#">${name}</a></td>
    <td>${seller}</td>
    <td>${clicks}</td>
    <td>${price}</td>
    <td><a href="#">df_goods/image/${image}</a></td>
    <td><input class="stock" type="text" aria-label="库存 ${id}" value="${stock}"></td>
    <td>${intro}</td>
  </tr>`).join('');
```
